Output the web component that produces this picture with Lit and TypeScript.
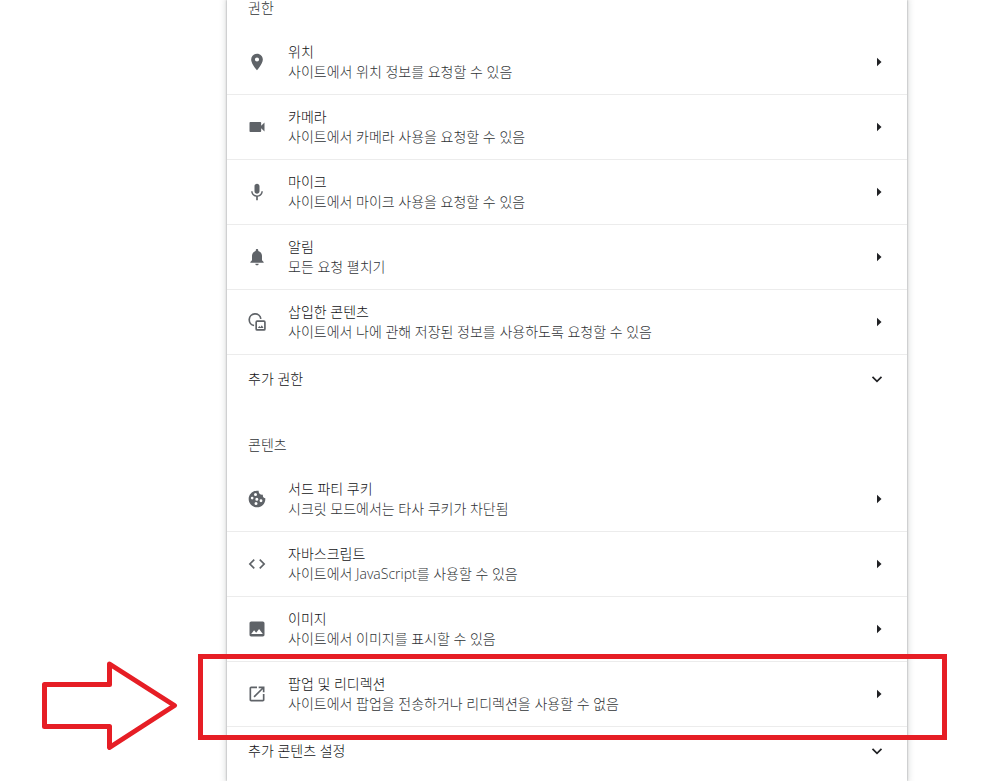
import { LitElement, html, css, svg, nothing } from "lit";
import { customElement, property, state } from "lit/decorators.js";

const icons: Record<string, unknown> = {
  location: svg`<path d="M12 2C8.13 2 5 5.13 5 9c0 5.25 7 13 7 13s7-7.75 7-13c0-3.87-3.13-7-7-7zm0 9.5a2.5 2.5 0 0 1 0-5 2.5 2.5 0 0 1 0 5z"/>`,
  camera: svg`<path d="M17 10.5V7c0-.55-.45-1-1-1H4c-.55 0-1 .45-1 1v10c0 .55.45 1 1 1h12c.55 0 1-.45 1-1v-3.5l4 4v-11l-4 4z"/>`,
  mic: svg`<path d="M12 14c1.66 0 3-1.34 3-3V5c0-1.66-1.34-3-3-3S9 3.34 9 5v6c0 1.66 1.34 3 3 3zm5.3-3c0 3-2.54 5.1-5.3 5.1S6.7 14 6.7 11H5c0 3.41 2.72 6.23 6 6.72V22h2v-4.280c3.28-.48 6-3.3 6-6.72h-1.7z"/>`,
  bell: svg`<path d="M12 22c1.1 0 2-.9 2-2h-4c0 1.100.9 2 2 2zm6-6v-5c0-3.07-1.63-5.64-4.5-6.32V4c0-.83-.67-1.5-1.5-1.5s-1.5.67-1.5 1.5v.68C7.64 5.36 6 7.92 6 11v5l-2 2v1h16v-1l-2-2z"/>`,
  embedded: svg`<path d="M8.5 16.200A7 7 0 1 1 16.600 8.200" fill="none" stroke="currentColor" stroke-width="2"/><rect x="11" y="11" width="10.5" height="10.5" rx="1.2" fill="none" stroke="currentColor" stroke-width="2"/><path d="M13 19.200l1.8-2.5 1.3 1.5 1.7-2.2 2 3.2z"/>`,
  cookie: svg`<path fill-rule="evenodd" d="M21.95 10.99c-1.79-.03-3.7-1.95-2.68-4.22-2.97 1-5.78-1.59-5.19-4.56C7.11.74 2 6.41 2 12c0 5.52 4.48 10 10 10 5.89 0 10.54-5.08 9.95-11.01zM6.200 12.500a1.600 1.600 0 1 1 0-3.200 1.600 1.600 0 0 1 0 3.200zm4-4a1.800 1.800 0 1 1 0-3.600 1.800 1.800 0 0 1 0 3.600zm1.600 5.500a1.800 1.800 0 1 1 0-3.600 1.800 1.800 0 0 1 0 3.600zm-1 5.300a1.800 1.800 0 1 1 0-3.600 1.800 1.800 0 0 1 0 3.600zm6-3.500a1.700 1.700 0 1 1 0-3.400 1.700 1.700 0 0 1 0 3.400z"/>`,
  code: svg`<path d="M9.4 16.6L4.8 12l4.6-4.6L8 6l-6 6 6 6 1.4-1.4zm5.2 0l4.6-4.6-4.6-4.6L16 6l6 6-6 6-1.4-1.4z"/>`,
  image: svg`<path d="M21 19V5c0-1.1-.9-2-2-2H5c-1.1 0-2 .9-2 2v14c0 1.1.9 2 2 2h14c1.1 0 2-.9 2-2zM8.5 13.5l2.5 3.01L14.5 12l4.500 6H5l3.5-4.500z"/>`,
  launch: svg`<path d="M19 19H5V5h7V3H5c-1.11 0-2 .9-2 2v14c0 1.1.89 2 2 2h14c1.1 0 2-.9 2-2v-7h-2v7zM14 3v2h3.59l-9.83 9.83 1.41 1.41L19 6.41V10h2V3h-7z"/>`,
};

interface Permission {
  icon: string;
  title: string;
  detail: string;
  marked?: boolean;
}

interface Section {
  heading: string;
  rows: Permission[];
  more: string;
}

const sections: Section[] = [
  {
    heading: "권한",
    rows: [
      { icon: "location", title: "위치", detail: "사이트에서 위치 정보를 요청할 수 있음" },
      { icon: "camera", title: "카메라", detail: "사이트에서 카메라 사용을 요청할 수 있음" },
      { icon: "mic", title: "마이크", detail: "사이트에서 마이크 사용을 요청할 수 있음" },
      { icon: "bell", title: "알림", detail: "모든 요청 펼치기" },
      { icon: "embedded", title: "삽입한 콘텐츠", detail: "사이트에서 나에 관해 저장된 정보를 사용하도록 요청할 수 있음" },
    ],
    more: "추가 권한",
  },
  {
    heading: "콘텐츠",
    rows: [
      { icon: "cookie", title: "서드 파티 쿠키", detail: "시크릿 모드에서는 타사 쿠키가 차단됨" },
      { icon: "code", title: "자바스크립트", detail: "사이트에서 JavaScript를 사용할 수 있음" },
      { icon: "image", title: "이미지", detail: "사이트에서 이미지를 표시할 수 있음" },
      { icon: "launch", title: "팝업 및 리디렉션", detail: "사이트에서 팝업을 전송하거나 리디렉션을 사용할 수 없음", marked: true },
    ],
    more: "추가 콘텐츠 설정",
  },
];

@customElement("permission-row")
class PermissionRow extends LitElement {
  @property({ attribute: false }) item!: Permission;

  static styles = css`
    :host {
      display: block;
      position: relative;
    }
    .row {
      display: flex;
      align-items: center;
      gap: 21px;
      width: 100%;
      box-sizing: border-box;
      padding: 12px 20px;
      border: 0;
      background: none;
      font: inherit;
      color: #111214;
      text-align: left;
      cursor: pointer;
    }
    .icon {
      flex: none;
      width: 20px;
      height: 20px;
      fill: currentColor;
      color: #5f6368;
    }
    .text {
      flex: 1;
      min-width: 0;
    }
    .title,
    .detail {
      display: block;
    }
    .detail {
      color: #303336;
    }
    .caret {
      flex: none;
      width: 20px;
      height: 20px;
      fill: #202124;
    }
    .frame {
      position: absolute;
      inset: -8px -40px -14px -29px;
      border: 5px solid #e61e25;
      pointer-events: none;
    }
    .arrow {
      position: absolute;
      right: calc(100% + 49px);
      top: -2px;
      width: 136px;
      height: 90px;
      fill: none;
      stroke: #e61e25;
      stroke-width: 5;
      stroke-linejoin: round;
      pointer-events: none;
    }
  `;

  render() {
    const { icon, title, detail, marked } = this.item;
    return html`
      <button class="row" type="button">
        <svg class="icon" viewBox="0 0 24 24" aria-hidden="true">${icons[icon]}</svg>
        <span class="text">
          <span class="title">${title}</span>
          <span class="detail">${detail}</span>
        </span>
        <svg class="caret" viewBox="0 0 20 20" aria-hidden="true"><path d="M10 5.7L14.5 10L10 14.3z" /></svg>
      </button>
      ${marked
        ? html`
            <div class="frame"></div>
            <svg class="arrow" viewBox="0 0 136 90" aria-hidden="true">
              <path d="M2.5 24.5H67.5V4L132.5 45.5L67.5 87.5V66.5H2.5z" />
            </svg>
          `
        : nothing}
    `;
  }
}

@customElement("app-root")
class AppRoot extends LitElement {
  @state() private expanded = new Set<string>();

  static styles = css`
    :host {
      display: grid;
      grid-template-columns: minmax(0, 227px) minmax(0, 680px) minmax(0, 1fr);
      min-height: 100vh;
      overflow: hidden;
      background: #fff;
      color: #111214;
      font-family: "Open Sans", "Noto Sans CJK KR", sans-serif;
      font-size: 14px;
      font-weight: 300;
      line-height: 20px;
    }
    .card {
      grid-column: 2;
      background: #fff;
      box-shadow: 0 0 2px rgba(60, 64, 67, 0.5), 0 0 6px 2px rgba(60, 64, 67, 0.15);
    }
    .section + .section {
      margin-top: 34px;
    }
    .heading {
      margin: 0;
      padding: 0 21px 14px;
      font-size: inherit;
      font-weight: inherit;
      line-height: 16px;
      color: #303336;
    }
    .list {
      margin: 0;
      padding: 0;
      list-style: none;
    }
    .item {
      border-bottom: 1px solid #ececec;
    }
    .more {
      display: flex;
      align-items: center;
      justify-content: space-between;
      width: 100%;
      box-sizing: border-box;
      padding: 14px 20px 14px 21px;
      border: 0;
      background: none;
      font: inherit;
      color: inherit;
      text-align: left;
      cursor: pointer;
    }
    .chevron {
      width: 20px;
      height: 20px;
      fill: none;
      stroke: #202124;
      stroke-width: 1.7;
    }
  `;

  private toggle(name: string) {
    const next = new Set(this.expanded);
    next.has(name) ? next.delete(name) : next.add(name);
    this.expanded = next;
  }

  render() {
    return html`
      <main class="card">
        ${sections.map(
          (section) => html`
            <section class="section">
              <h2 class="heading">${section.heading}</h2>
              <ul class="list">
                ${section.rows.map(
                  (row) => html`<li class="item"><permission-row .item=${row}></permission-row></li>`
                )}
              </ul>
              <button
                class="more"
                type="button"
                aria-expanded=${this.expanded.has(section.more) ? "true" : "false"}
                @click=${() => this.toggle(section.more)}
              >
                <span>${section.more}</span>
                <svg class="chevron" viewBox="0 0 20 20" aria-hidden="true"><path d="M5.5 7.8L10 12.3L14.5 7.8" /></svg>
              </button>
            </section>
          `
        )}
      </main>
    `;
  }
}
